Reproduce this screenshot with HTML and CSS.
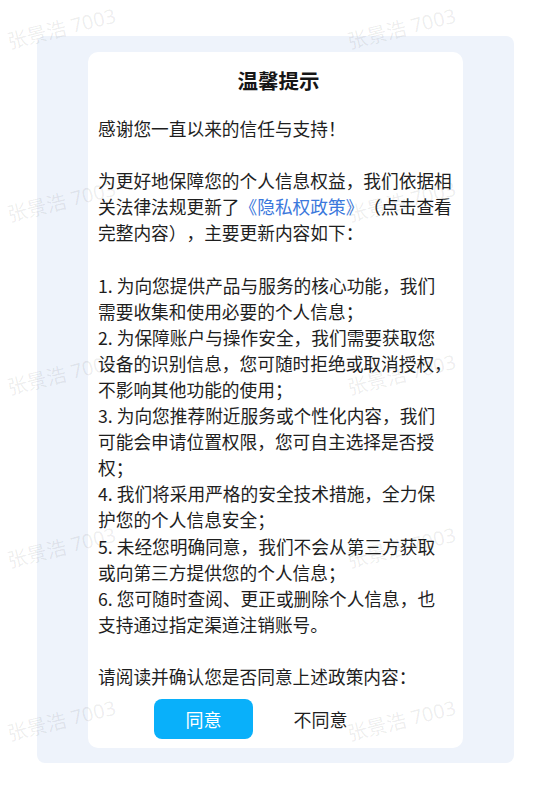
FILE: index.html
```html
<!DOCTYPE html>
<html lang="zh-CN">
<head>
<meta charset="utf-8">
<title>温馨提示</title>
<link rel="stylesheet" href="styles.css">
</head>
<body>
<div class="page">
  <div class="panel">
    <div class="card">
      <h1 class="title">温馨提示</h1>
      <div class="content">
        <p class="para">感谢您一直以来的信任与支持！</p>
        <p class="para">为更好地保障您的个人信息权益，我们依据相<br>关法律法规更新了<a class="link" href="#">《隐私权政策》</a>（点击查看<br>完整内容），主要更新内容如下：</p>
        <div class="para">
          <p class="item">1. 为向您提供产品与服务的核心功能，我们<br>需要收集和使用必要的个人信息；</p>
          <p class="item">2. 为保障账户与操作安全，我们需要获取您<br>设备的识别信息，您可随时拒绝或取消授权，<br>不影响其他功能的使用；</p>
          <p class="item">3. 为向您推荐附近服务或个性化内容，我们<br>可能会申请位置权限，您可自主选择是否授<br>权；</p>
          <p class="item">4. 我们将采用严格的安全技术措施，全力保<br>护您的个人信息安全；</p>
          <p class="item">5. 未经您明确同意，我们不会从第三方获取<br>或向第三方提供您的个人信息；</p>
          <p class="item">6. 您可随时查阅、更正或删除个人信息，也<br>支持通过指定渠道注销账号。</p>
        </div>
        <p class="para">请阅读并确认您是否同意上述政策内容：</p>
      </div>
      <div class="actions">
        <button class="btn btn-agree" type="button">同意</button>
        <button class="btn btn-disagree" type="button">不同意</button>
      </div>
    </div>
  </div>
  <div class="watermarks" aria-hidden="true">
    <span class="wm">张景浩 7003</span><span class="wm">张景浩 7003</span>
    <span class="wm">张景浩 7003</span><span class="wm">张景浩 7003</span>
    <span class="wm">张景浩 7003</span><span class="wm">张景浩 7003</span>
    <span class="wm">张景浩 7003</span><span class="wm">张景浩 7003</span>
    <span class="wm">张景浩 7003</span><span class="wm">张景浩 7003</span>
  </div>
</div>
</body>
</html>
```
FILE: styles.css
```css
html, body {
  margin: 0;
  padding: 0;
  background: #ffffff;
}

body {
  font-family: "Noto Sans CJK SC", "Noto Sans", sans-serif;
  color: #1e1e1e;
  text-spacing-trim: space-all;
}

.page {
  position: relative;
  width: 549px;
  height: 800px;
  overflow: hidden;
}

.panel {
  margin: 36px 0 0 37px;
  width: 477px;
  box-sizing: border-box;
  padding: 16px 51px 15px 51px;
  background: #eef3fb;
  border-radius: 8px;
}

.card {
  background: #ffffff;
  border-radius: 10px;
  padding: 14px 10px 9px 10px;
}

.title {
  margin: 0;
  font-size: 20.5px;
  line-height: 28px;
  font-weight: 700;
  text-align: center;
  color: #161616;
  padding-left: 6px;
}

.content {
  margin-top: 21px;
  font-size: 17.7px;
  line-height: 26.1px;
  white-space: nowrap;
}

.para {
  margin: 0 0 26.1px 0;
}

.para:last-child {
  margin-bottom: 0;
}

.item {
  margin: 0;
}

.link {
  color: #3b78dc;
  text-decoration: none;
}

.actions {
  display: flex;
  gap: 18px;
  margin-top: 10px;
  padding-left: 56px;
}

.btn {
  width: 99px;
  height: 40px;
  border: none;
  border-radius: 8px;
  font-family: "Noto Sans CJK SC", "Noto Sans", sans-serif;
  font-size: 18px;
  padding: 0;
  cursor: pointer;
}

.btn-agree {
  background: #09b0fa;
  color: #ffffff;
}

.btn-disagree {
  background: transparent;
  color: #1f1f1f;
}

.watermarks {
  position: absolute;
  inset: 0;
  pointer-events: none;
  display: grid;
  grid-template-columns: 340px 340px;
  grid-auto-rows: 173px;
  padding: 18px 0 0 6px;
}

.wm {
  display: block;
  width: 118px;
  height: 20px;
  font-family: "Noto Sans", "Noto Sans CJK SC", sans-serif;
  font-size: 20px;
  line-height: 20px;
  white-space: nowrap;
  color: rgba(0, 0, 0, 0.075);
  transform: rotate(-14deg);
  transform-origin: center;
}
```
